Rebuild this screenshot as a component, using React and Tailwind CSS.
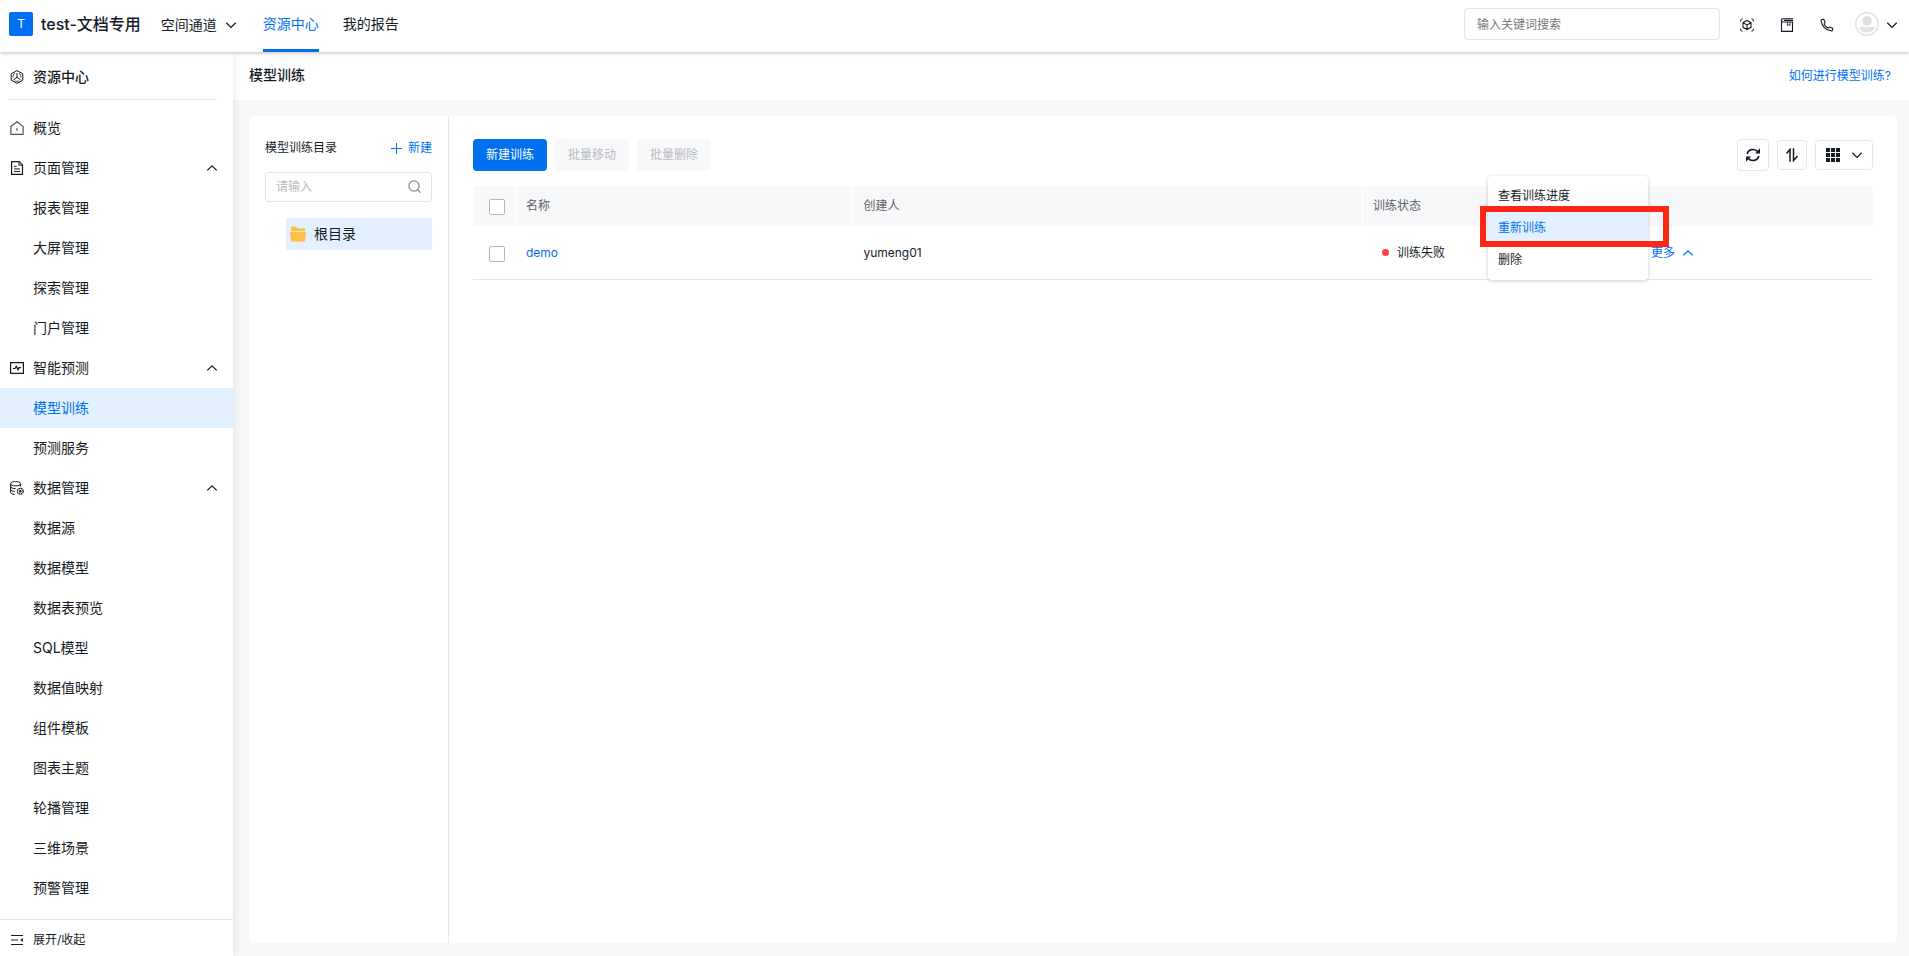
import React from "react";

const Icon = ({ size = 14, className = "", children }) => (
  <svg
    width={size}
    height={size}
    viewBox={`0 0 ${size} ${size}`}
    fill="none"
    stroke="currentColor"
    aria-hidden="true"
    className={`shrink-0 ${className}`}
  >
    {children}
  </svg>
);

const ChevronDown = () => (
  <Icon size={12}>
    <path d="M1.3 3.8 6 8.4l4.7-4.6" strokeWidth="1.3" />
  </Icon>
);

const ChevronUp = () => (
  <Icon size={12}>
    <path d="M1.3 8.4 6 3.8l4.7 4.6" strokeWidth="1.3" />
  </Icon>
);

const CenterIcon = () => (
  <Icon>
    <path d="M7 .6 12.8 3.8v6.4L7 13.4 1.2 10.2V3.8z" />
    <path d="M7 3v4.2M7 7.2 3.4 10M7 7.2l3.6 2.8" />
    <path d="M5 3.2C3.6 4 2.9 5.4 3 7.5M9 3.2c1.4.8 2.1 2.2 2 4.3M4.8 10.8c1.4.7 3 .7 4.4 0" strokeWidth=".8" />
  </Icon>
);

const HomeIcon = () => (
  <Icon className="text-[#50555f]">
    <path d="M.9 5.4 7 .8l6.1 4.6v7.9H.9z" strokeWidth="1.2" strokeLinejoin="round" />
    <path d="M7 7.2v2.6" strokeWidth="1.3" />
  </Icon>
);

const PageIcon = () => (
  <Icon>
    <path d="M1.6.6h7.6l3.3 3.3v9.5H1.6z" strokeWidth="1.2" />
    <path d="M9 .8v3.4h3.3M4 5.4h2.5M4 7.9h6M4 10.4h6" />
  </Icon>
);

const PredictIcon = () => (
  <Icon>
    <path d="M.6 1.6h12.8v10.8H.6z" strokeWidth="1.2" />
    <path d="M3 7.5h2l1.3-2.3L8 8.8l1-2.1h2" strokeWidth="1.2" />
  </Icon>
);

const DataIcon = () => (
  <Icon>
    <ellipse cx="5.5" cy="2.7" rx="4.9" ry="2.1" />
    <path d="M.6 2.7v8.7c0 1 1.8 1.9 4.2 2.1M10.4 2.7v3M.6 5.7c.1 1 2 1.9 5 1.9M.6 8.6c.1 1 1.8 1.8 4.2 1.9" />
    <circle cx="10.3" cy="10.2" r="2.9" strokeWidth="1.3" strokeDasharray="1.8 .5" />
    <circle cx="10.3" cy="10.2" r="1.2" fill="currentColor" stroke="none" />
  </Icon>
);

const CollapseIcon = () => (
  <Icon>
    <path d="M1 2.5h12M1 7h7M1 11.5h12" strokeWidth="1.2" />
    <path d="M12.8 5v4L10.2 7z" fill="currentColor" stroke="none" />
  </Icon>
);

const CubeIcon = () => (
  <Icon>
    <path d="M.7 3.5V1.7L2.5.7M11.5.7l1.8 1v1.8M13.3 10.5v1.8l-1.8 1M2.5 13.3l-1.8-1v-1.8" />
    <path d="M7 2.5 11 4.7v4.6l-4 2.2-4-2.2V4.7zM3 4.7l4 2.2 4-2.2M7 6.9v4.6" strokeWidth="1.1" />
  </Icon>
);

const BookIcon = () => (
  <Icon>
    <path d="M13 .7H2.8C.8.7.8 4 2.800 4h9.700v9.400H1.500V2.400M3.800 2.400H13" strokeWidth="1.1" />
    <path d="M7.500 4v3.500l1.300-.9 1.300.9V4" strokeWidth=".8" />
  </Icon>
);

const PhoneIcon = () => (
  <Icon>
    <path
      d="M3.7 1.2 1.6 1.5c-.5.1-.6.5-.5 1C1.6 8 5.8 12.3 11.4 12.9c.6.1.9-.1 1-.6l.3-2-3.200-1.400-1.500 1.200C6.300 9.200 4.900 7.700 4 6l1.100-1.500z"
      strokeWidth="1.1"
      strokeLinejoin="round"
    />
  </Icon>
);

const menuGroups = [
  { label: "概览", icon: HomeIcon },
  {
    label: "页面管理",
    icon: PageIcon,
    children: ["报表管理", "大屏管理", "探索管理", "门户管理"],
  },
  {
    label: "智能预测",
    icon: PredictIcon,
    children: ["模型训练", "预测服务"],
  },
  {
    label: "数据管理",
    icon: DataIcon,
    children: [
      "数据源",
      "数据模型",
      "数据表预览",
      "SQL模型",
      "数据值映射",
      "组件模板",
      "图表主题",
      "轮播管理",
      "三维场景",
      "预警管理",
    ],
  },
];

const checkboxClass =
  "block size-4 appearance-none rounded-xs border border-[#b4b6ba] bg-white checked:bg-[#0070f0]";

const Header = () => (
  <header className="relative z-20 flex h-[52px] shrink-0 items-center bg-white pl-[9px] pr-[11px] shadow-[0_1px_4px_rgba(0,0,0,0.25)]">
    <span className="mb-1 flex size-6 items-center justify-center rounded-xs bg-[#0070f0] text-xs text-white">T</span>
    <span className="mb-1 ml-2 text-base font-medium">test-文档专用</span>
    <button type="button" className="mb-[2px] ml-5 flex items-center gap-2 text-sm">
      空间通道
      <ChevronDown />
    </button>
    <nav className="ml-[26px] flex h-full gap-6 text-sm">
      <a href="#resource" className="flex items-center border-b-3 border-[#0070f0] pb-[2px] text-[#0070f0]">
        资源中心
      </a>
      <a href="#report" className="flex items-center border-b-3 border-transparent pb-[2px]">
        我的报告
      </a>
    </nav>
    <div className="mb-[2px] ml-auto flex items-center">
      <input
        type="search"
        aria-label="关键词搜索"
        placeholder="输入关键词搜索"
        className="mb-[2px] h-8 w-64 rounded border border-[#e6e7e9] px-3 text-xs outline-none placeholder:text-[#777]"
      />
      <div className="ml-5 flex items-center gap-[26px]">
        <button type="button" aria-label="三维"><CubeIcon /></button>
        <button type="button" aria-label="文档"><BookIcon /></button>
        <button type="button" aria-label="电话"><PhoneIcon /></button>
      </div>
      <button type="button" aria-label="账户" className="ml-[21px] flex items-center gap-[7px]">
        <svg width="24" height="24" viewBox="0 0 24 24" aria-hidden="true" className="mb-[2px]">
          <circle cx="12" cy="12" r="11.3" fill="#fff" stroke="#dfe1e5" strokeWidth="1.4" />
          <circle cx="12" cy="9" r="4.8" fill="#dfe1e5" />
          <path d="M4 15.5c2-1 4-1 5.5-.6 1.600.5 3.400.5 5 0 1.500-.4 3.500-.4 5.500.6a9 9 0 0 1-16 0z" fill="#dfe1e5" />
        </svg>
        <ChevronDown />
      </button>
    </div>
  </header>
);

const Sidebar = () => (
  <aside className="relative z-10 flex w-[233px] shrink-0 flex-col bg-white shadow-[0_0_8px_rgba(0,0,0,0.1)]">
    <div className="ml-[9px] mr-4 flex h-12 items-center gap-[9px] border-b border-[#e6e7e9] pl-px pt-[2px] text-sm font-medium">
      <CenterIcon />
      资源中心
    </div>
    <nav className="flex-1 overflow-hidden pt-2 text-sm">
      {menuGroups.map(({ label, icon: GroupIcon, children }) => (
        <div key={label}>
          <button type="button" className="flex h-10 w-full items-center gap-[9px] pl-[10px] pr-[15px]">
            <GroupIcon />
            <span className="flex-1 text-left">{label}</span>
            {children && <ChevronUp />}
          </button>
          {children?.map((item) => (
            <a
              key={item}
              href="#menu"
              className={
                item === "模型训练"
                  ? "flex h-10 items-center bg-[#e3f0ff] pl-[33px] text-[#0070f0]"
                  : "flex h-10 items-center pl-[33px]"
              }
            >
              {item}
            </a>
          ))}
        </div>
      ))}
    </nav>
    <button type="button" className="flex h-[37px] items-center gap-[9px] border-t border-[#e6e7e9] pl-[10px] pt-1 text-xs">
      <CollapseIcon />
      展开/收起
    </button>
  </aside>
);

const Directory = () => (
  <section className="w-[200px] shrink-0 border-r border-[#e6e7e9] px-4 pt-5">
    <div className="flex h-6 items-center justify-between text-xs">
      <h2>模型训练目录</h2>
      <button type="button" className="flex items-center gap-[6px] text-[#0070f0]">
        <Icon size={11}>
          <path d="M0 5.5h11M5.5 0v11" />
        </Icon>
        新建
      </button>
    </div>
    <label className="mt-3 flex h-[30px] items-center rounded border border-[#e2e3e6] px-[10px]">
      <input
        type="text"
        aria-label="搜索目录"
        placeholder="请输入"
        className="w-full min-w-0 text-xs outline-none placeholder:text-[#b8babf]"
      />
      <Icon size={13} className="mb-[2px] text-[#84868c]">
        <circle cx="6" cy="6" r="5.1" strokeWidth="1.2" />
        <path d="m9.600 9.600 3 3" strokeWidth="1.2" />
      </Icon>
    </label>
    <button type="button" className="mt-4 ml-[21px] flex h-8 w-[146px] items-center gap-2 bg-[#e3f0ff] pl-1 text-sm">
      <svg width="16" height="16" viewBox="0 0 16 16" fill="#fbc345" aria-hidden="true">
        <path d="M1 .5h5l1.500 1.700H15V5H1z" />
        <path d="M0 5.800h16l-1 9.200a1 1 0 0 1-1 .8H2a1 1 0 0 1-1-.8z" />
      </svg>
      根目录
    </button>
  </section>
);

const RowMenu = () => (
  <div className="absolute right-full top-1/2 z-10 mr-[3px] w-40 -translate-y-[77px] rounded bg-white py-1 shadow-[0_1px_4px_rgba(0,0,0,0.2)]">
    <button type="button" className="block h-8 w-full px-[10px] text-left">查看训练进度</button>
    <div className="relative">
      <button type="button" className="block h-8 w-full bg-[#e3f0ff] px-[10px] text-left text-[#0070f0]">
        重新训练
      </button>
      {/* рамка-подсказка вокруг пункта */}
      <div className="pointer-events-none absolute -bottom-[3px] -left-2 -right-[21px] -top-[6px] border-[6px] border-[#ff2615]" />
    </div>
    <button type="button" className="block h-8 w-full px-[10px] text-left">删除</button>
  </div>
);

const TrainingTable = () => (
  <table className="mt-[15px] w-full table-fixed border-separate border-spacing-0 text-left text-xs">
    <thead>
      <tr className="h-10 text-[#5c5f66]">
        <th className="w-[43px] rounded-tl border-r border-white bg-[#f7f8fa] pl-4 pt-[2px]">
          <input type="checkbox" aria-label="全选" className={checkboxClass} />
        </th>
        <th className="w-[24.1%] border-r border-white bg-[#f7f8fa] px-[10px] font-normal">名称</th>
        <th className="w-[36.4%] border-r border-white bg-[#f7f8fa] px-[10px] font-normal">创建人</th>
        <th className="w-[20%] border-r border-white bg-[#f7f8fa] px-[10px] font-normal">训练状态</th>
        <th className="rounded-tr bg-[#f7f8fa]" aria-label="操作" />
      </tr>
    </thead>
    <tbody>
      <tr className="h-[54px]">
        <td className="border-b border-[#e6e7e9] pl-4 pt-[2px]">
          <input type="checkbox" aria-label="选择 demo" className={checkboxClass} />
        </td>
        <td className="border-b border-[#e6e7e9] px-[10px]">
          <a href="#demo" className="text-[#0070f0]">demo</a>
        </td>
        <td className="border-b border-[#e6e7e9] px-[10px]">yumeng01</td>
        <td className="border-b border-[#e6e7e9] px-[10px]">
          <span className="flex items-center gap-2 pl-[9px]">
            <span className="size-[7px] rounded-full bg-[#ff3f3f]" />
            训练失败
          </span>
        </td>
        <td className="border-b border-[#e6e7e9] pl-2">
          <div className="relative">
            <button type="button" className="flex items-center gap-[7px] text-[#0070f0]">
              更多
              <ChevronUp />
            </button>
            <RowMenu />
          </div>
        </td>
      </tr>
    </tbody>
  </table>
);

const App = () => {
  return (
    <div className="flex h-screen flex-col bg-[#f6f7f9] font-['Inter','Noto_Sans_CJK_SC',sans-serif] text-[#151b26]">
      <Header />
      <div className="flex min-h-0 flex-1">
        <Sidebar />
        <main className="flex min-w-0 flex-1 flex-col">
          <div className="flex h-12 shrink-0 items-center justify-between bg-white pl-4 pr-[18px]">
            <h1 className="pb-[2px] text-sm font-medium">模型训练</h1>
            <a href="#help" className="text-xs text-[#0070f0]">如何进行模型训练?</a>
          </div>
          <div className="mb-[13px] ml-4 mr-3 mt-4 flex min-h-0 flex-1 rounded-md bg-white">
            <Directory />
            <section className="min-w-0 flex-1 px-6 pt-[23px]">
              <div className="flex items-center gap-2 text-xs">
                <button type="button" className="h-8 rounded bg-[#0070f0] px-[13px] text-white">新建训练</button>
                <button type="button" disabled className="h-8 rounded bg-[#f7f8fa] px-[13px] text-[#b8babf]">批量移动</button>
                <button type="button" disabled className="h-8 rounded bg-[#f7f8fa] px-[13px] text-[#b8babf]">批量删除</button>
                <button type="button" aria-label="刷新" className="ml-auto flex size-8 items-center justify-center rounded border border-[#e6e7e9]">
                  <Icon>
                    <path d="M1.200 6A5.900 5.400 0 0 1 11.800 3.800M12.800 8A5.900 5.400 0 0 1 2.200 10.200" strokeWidth="1.7" />
                    <path d="M14 .3v5.100H9zM0 13.700V8.600h5z" fill="currentColor" stroke="none" />
                  </Icon>
                </button>
                <button type="button" aria-label="排序" className="flex size-[30px] items-center justify-center rounded border border-[#e6e7e9]">
                  <Icon>
                    <path d="M1.500 5.500 5 1.400v12.400M8.500.2v12.400L12.500 8" strokeWidth="1.5" />
                  </Icon>
                </button>
                <button type="button" aria-label="视图" className="flex h-[30px] w-[58px] items-center justify-between rounded border border-[#e6e7e9] pl-[10px] pr-[9px]">
                  <Icon>
                    <path d="M0 2h4M5 2h4M10 2h4M0 7h4M5 7h4M10 7h4M0 12h4M5 12h4M10 12h4" strokeWidth="4" />
                  </Icon>
                  <ChevronDown />
                </button>
              </div>
              <TrainingTable />
            </section>
          </div>
        </main>
      </div>
    </div>
  );
};

export default App;
